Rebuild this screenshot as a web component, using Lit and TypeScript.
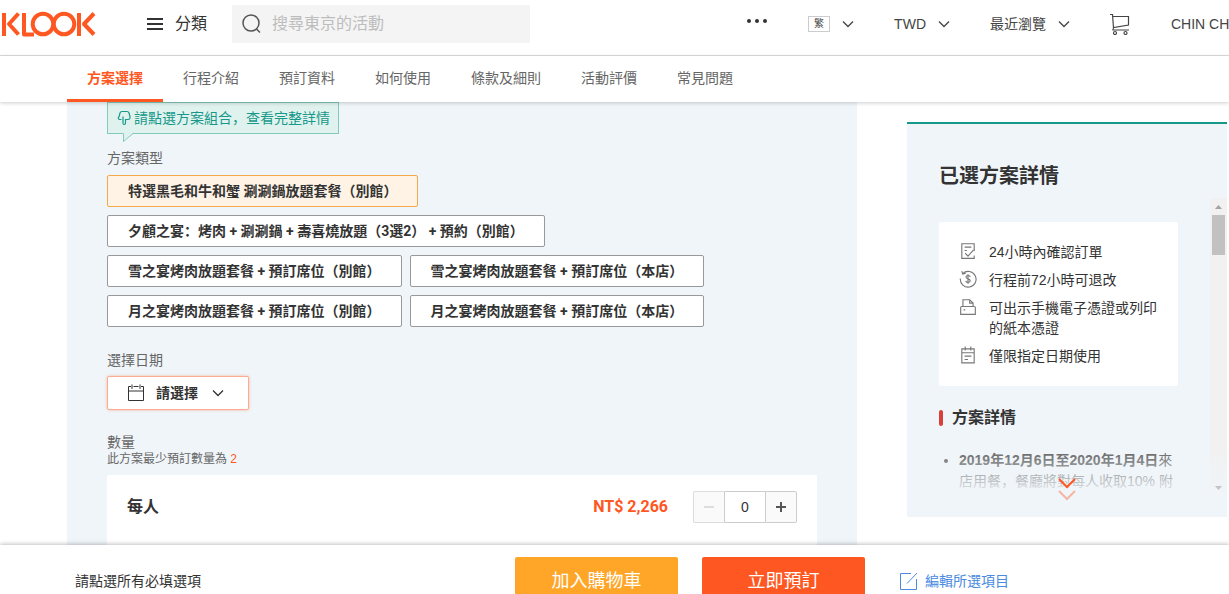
import { LitElement, html, css, svg } from "lit";
import { customElement, state } from "lit/decorators.js";
import { classMap } from "lit/directives/class-map.js";

const chevron = html`<svg class="chev" viewBox="0 0 10 8" aria-hidden="true"><path d="M0 1.500l5 5 5-5" /></svg>`;

const featureIcons = {
  confirm: svg`<path d="M13.500 8V1.500H2.500v13h11V12"/><path d="M5 4.500h6M5 7.500h2M5.500 10l2.500 2.500 5-5.500"/>`,
  refund: svg`<path d="M3.300 3.200A7 7 0 1 1 1.200 7.500M2.500 1l.8 2.600 2.700-.7"/><path d="M10 6.200C9.700 4.400 6.200 4.500 6.200 6.300c0 2 3.800 1.200 3.800 3.300 0 1.800-3.700 2-4 0M8 3.700v8.600"/>`,
  print: svg`<path d="M3.500 7.500v-6h6l3 3v3M9.500 1.500v3h3M2.500 7.500h11q1 0 1 1v6h-13v-6q0-1 1-1M4 10.500h1.500"/>`,
  calendar: svg`<path d="M2.500 2.500h11v12.500h-11zM2.500 6h11M5.500 .5v3.500M10.500 .5v3.500M5 9h6M5 12h3"/>`,
};

@customElement("app-root")
export class AppRoot extends LitElement {
  @state() private selected = 0;
  @state() private count = 0;

  private tabs = ["方案選擇", "行程介紹", "預訂資料", "如何使用", "條款及細則", "活動評價", "常見問題"];

  private packages = [
    "特選黑毛和牛和蟹 涮涮鍋放題套餐（別館）",
    "夕顧之宴：烤肉 + 涮涮鍋 + 壽喜燒放題（3選2） + 預約（別館）",
    "雪之宴烤肉放題套餐 + 預訂席位（別館）",
    "雪之宴烤肉放題套餐 + 預訂席位（本店）",
    "月之宴烤肉放題套餐 + 預訂席位（別館）",
    "月之宴烤肉放題套餐 + 預訂席位（本店）",
  ];

  private features: { icon: keyof typeof featureIcons; text: string }[] = [
    { icon: "confirm", text: "24小時內確認訂單" },
    { icon: "refund", text: "行程前72小時可退改" },
    { icon: "print", text: "可出示手機電子憑證或列印的紙本憑證" },
    { icon: "calendar", text: "僅限指定日期使用" },
  ];

  static styles = css`
    :host {
      display: flex;
      flex-direction: column;
      height: 100vh;
      overflow: hidden;
      background: #fff;
      color: #333;
      font: 14px/20px "Liberation Sans", "Noto Sans CJK SC", sans-serif;
    }
    * { box-sizing: border-box; }
    h2, h3, p, ul { margin: 0; padding: 0; }
    ul { list-style: none; }
    a { color: inherit; text-decoration: none; }
    button { font: inherit; color: inherit; margin: 0; cursor: pointer; }
    svg { display: block; fill: none; stroke: currentColor; flex: none; }
    .chev { width: 10px; height: 8px; overflow: visible; stroke-width: 1.300; }

    .top {
      flex: none;
      display: flex;
      align-items: center;
      height: 56px;
      padding-bottom: 7px;
      border-bottom: 1px solid #ddd;
    }
    .logo { color: #ff5722; margin-left: 1px; }
    .logo svg { width: 96px; height: 26px; stroke-width: 4; stroke-linejoin: round; }
    .cats {
      display: flex;
      align-items: center;
      gap: 12px;
      margin-left: 50px;
      padding: 0;
      border: 0;
      background: none;
      font-size: 16px;
    }
    .cats svg { width: 16px; height: 14px; stroke-width: 2; }
    .search {
      display: flex;
      align-items: center;
      gap: 10px;
      width: 298px;
      height: 38px;
      margin-left: 25px;
      padding-left: 10px;
      background: #f4f4f4;
      color: #555;
    }
    .search svg { width: 20px; height: 20px; stroke-width: 1.500; }
    .search input {
      flex: 1;
      min-width: 0;
      padding: 0;
      border: 0;
      outline: 0;
      background: none;
      font: inherit;
      font-size: 16px;
    }
    .search input::placeholder { color: #bdbdbd; opacity: 1; }
    .tools { display: flex; align-items: center; gap: 41px; margin-left: auto; color: #444; }
    .tools button {
      display: flex;
      align-items: center;
      gap: 13px;
      padding: 0;
      border: 0;
      background: none;
      white-space: nowrap;
    }
    .tools .dots svg { width: 20px; height: 10px; fill: #333; stroke: none; }
    .lang {
      width: 22px;
      height: 16px;
      border: 1px solid #ccc;
      font-size: 10px;
      line-height: 14px;
      text-align: center;
    }
    .cart svg { width: 20px; height: 22px; stroke-width: 1.200; }
    .user { width: 58px; overflow: hidden; white-space: nowrap; }

    .tabs {
      position: relative;
      z-index: 2;
      flex: none;
      display: flex;
      height: 46px;
      padding-left: 67px;
      background: #fff;
      box-shadow: 0 1px 4px rgba(0, 0, 0, 0.2);
      color: #666;
    }
    .tab { padding: 12px 20px; border-bottom: 3px solid transparent; white-space: nowrap; }
    .tab.on { color: #ff5722; border-color: #ff5722; font-weight: 700; }

    .page {
      flex: 1;
      min-height: 0;
      display: flex;
      align-items: flex-start;
      gap: 50px;
      padding: 0 2px 0 67px;
      overflow: hidden;
    }
    .options { flex: 1; min-width: 0; padding: 0 40px 40px; background: #f0f5f9; }
    .tip {
      position: relative;
      display: flex;
      align-items: center;
      gap: 3px;
      width: max-content;
      height: 32px;
      padding: 0 8px 0 9px;
      border: 1px solid #80cbbb;
      background: #e0f2ee;
      color: #16998a;
    }
    .tip .hand { width: 14px; height: 16px; stroke-width: 1.200; }
    .tip .tail {
      position: absolute;
      left: 14px;
      top: 100%;
      width: 12px;
      height: 9px;
    }
    .tail { fill: #e0f2ee; stroke: #80cbbb; }
    .label { color: #666; }
    .tip + .label { margin-top: 14px; }
    .packs { display: flex; flex-wrap: wrap; gap: 8px; margin-top: 7px; }
    .pack {
      height: 32px;
      padding: 0 20px;
      border: 1px solid #999;
      border-radius: 2px;
      background: #fff;
      font-family: Roboto, "Noto Sans CJK SC", sans-serif;
      font-weight: 700;
      white-space: nowrap;
    }
    .pack.on { border-color: #f5a94a; background: #fff3e6; }
    .packs + .label { margin-top: 23px; }
    .date {
      display: flex;
      align-items: center;
      width: 142px;
      height: 34px;
      margin: 6px 0 22px;
      padding: 0 19px;
      border: 1px solid #ffab91;
      border-radius: 2px;
      background: #fff;
      box-shadow: 0 0 3px rgba(255, 87, 34, 0.4);
      font-weight: 700;
    }
    .date .cal { width: 18px; height: 18px; margin-right: 11px; }
    .date .chev { margin-left: 15px; }
    .note { color: #666; font-size: 12px; line-height: 14px; }
    .accent { color: #ff5722; }
    .unit {
      display: flex;
      align-items: center;
      height: 64px;
      margin-top: 9px;
      padding: 0 20px;
      background: #fff;
      font-size: 16px;
      font-weight: 700;
    }
    .rest { height: 24px; background: #fff; }
    .price { margin: 0 25px 0 auto; color: #ff5722; font-family: Roboto, sans-serif; }
    .stepper { display: flex; height: 32px; }
    .stepper button, .stepper input {
      border: 1px solid #ccc;
      background: #fafafa;
      padding: 0;
      font: 14px/20px "Liberation Sans", sans-serif;
      text-align: center;
      color: #333;
    }
    .stepper button { display: grid; place-items: center; width: 32px; }
    .stepper svg { width: 12px; height: 12px; stroke-width: 2; }
    .stepper input { width: 40px; background: #fff; border-radius: 0; border-width: 1px 0; }
    .stepper .less { border-radius: 2px 0 0 2px; border-color: #ddd; border-right-color: #ccc; }
    .stepper .less:disabled { color: #ddd; }
    .stepper .more { border-radius: 0 2px 2px 0; color: #555; }

    .side {
      flex: none;
      width: 320px;
      margin-top: 20px;
      border-top: 2px solid #16998a;
      background: #f0f5f9;
    }
    .side h2 { padding: 37px 32px 0; font-size: 20px; line-height: 30px; }
    .scroll { display: flex; justify-content: space-between; height: 299px; margin: 7px 0 20px; }
    .inner {
      position: relative;
      width: 271px;
      padding: 24px 0 0 32px;
      overflow: hidden;
    }
    .bar {
      display: flex;
      flex-direction: column;
      align-items: center;
      width: 17px;
      background: linear-gradient(#f1f1f1 85%, #f0f5f9);
      color: #a3a3a3;
    }
    .bar svg { width: 17px; height: 17px; fill: currentColor; stroke: none; }
    .thumb { width: 13px; height: 40px; background: #c1c1c1; }
    .bar .down { margin-top: auto; opacity: 0.6; }
    .features {
      display: flex;
      flex-direction: column;
      gap: 8px;
      padding: 20px 20px;
      border-radius: 2px;
      background: #fff;
    }
    .features li { display: flex; gap: 12px; }
    .features svg { width: 18px; height: 18px; stroke: #777; }
    .side h3 { display: flex; align-items: center; gap: 9px; margin-top: 20px; font-size: 16px; line-height: 24px; }
    .side h3::before { content: ""; width: 4px; height: 16px; border-radius: 2px; background: #d9403a; }
    .detail { margin-top: 20px; line-height: 21px; color: #666; padding-left: 20px; list-style: disc; }
    .fade {
      position: absolute;
      left: 0;
      right: 0;
      bottom: 0;
      height: 46px;
      background: linear-gradient(rgba(240, 245, 249, 0), #f0f5f9);
    }
    .holder { position: relative; }
    .expand {
      position: absolute;
      left: 151px;
      bottom: -4px;
      width: 18px;
      height: 24px;
      padding: 0;
      border: 0;
      background: none;
      color: #ff5722;
    }
    .expand svg { width: 18px; height: 24px; stroke-width: 2; }

    .pay {
      position: relative;
      z-index: 2;
      flex: none;
      display: flex;
      align-items: flex-start;
      height: 49px;
      padding: 12px 220px 0 75px;
      background: #fff;
      box-shadow: 0 -1px 4px rgba(0, 0, 0, 0.25);
    }
    .pay p { line-height: 48px; margin-right: auto; }
    .pay button {
      flex: none;
      width: 163px;
      height: 48px;
      margin-right: 24px;
      padding: 0;
      border: 0;
      border-radius: 2px;
      color: #fff;
      font-size: 18px;
    }
    .buy { background: #ffa628; }
    .now { background: #ff5722; }
    .pay a { display: flex; align-items: center; gap: 7px; height: 48px; margin-left: 10px; color: #4a8ae0; }
    .pay a svg { width: 19px; height: 19px; }
  `;

  render() {
    return html`
      <header class="top">
        <a class="logo" href="#" aria-label="KLOOK">
          <svg viewBox="0 0 96 26">
            <path d="M3 2v23M17.500 2.500L8 13l9.500 10.500M23 2v21.500h10M78 2v23M93 2.500L83 13l10 10.500" />
            <circle cx="42" cy="13" r="10.300" /><circle cx="63" cy="13" r="10.300" />
          </svg>
        </a>
        <button class="cats">
          <svg viewBox="0 0 16 14"><path d="M0 2h16M0 7h16M0 12h16" /></svg>分類
        </button>
        <label class="search">
          <svg viewBox="0 0 20 20"><circle cx="9" cy="9" r="8" /><path d="M14.500 15l3.500 3.500" /></svg>
          <input type="search" placeholder="搜尋東京的活動" aria-label="搜尋東京的活動" />
        </label>
        <nav class="tools">
          <button class="dots" aria-label="更多">
            <svg viewBox="0 0 20 10"><circle cx="2" cy="2" r="2" /><circle cx="10" cy="2" r="2" /><circle cx="18" cy="2" r="2" /></svg>
          </button>
          <button><span class="lang">繁</span>${chevron}</button>
          <button>TWD ${chevron}</button>
          <button>最近瀏覽 ${chevron}</button>
          <a class="cart" href="#" aria-label="購物車">
            <svg viewBox="0 0 20 22">
              <path d="M0 1.500h2.500l1 13L18.500 12V3.500H3M3.500 14.500L3 17h16" />
              <circle cx="5" cy="20" r="1.500" /><circle cx="15.500" cy="20" r="1.500" />
            </svg>
          </a>
          <a class="user" href="#">CHIN CH</a>
        </nav>
      </header>

      <nav class="tabs">
        ${this.tabs.map((t, i) => html`<a href="#" class=${classMap({ tab: true, on: i === 0 })}>${t}</a>`)}
      </nav>

      <main class="page">
        <section class="options">
          <div class="tip">
            <svg class="hand" viewBox="0 0 14 16"><path d="M4.500 9.500H3C1 9.500.8 7.500 2 6.800L3 3c.3-1.200.8-1.500 2-1.500h5c1.200 0 1.700.5 2 1.500l1 3.500c.3 2-.5 3-2 3H8.500V13c0 2-2.500 2-2.500 0V6.500" /></svg>
            請點選方案組合，查看完整詳情
            <svg class="tail" viewBox="0 0 12 9"><path stroke="none" d="M1 0h10L1 8z" /><path fill="none" d="M1.500 .5v8L11 .5" /></svg>
          </div>
          <p class="label">方案類型</p>
          <div class="packs">
            ${this.packages.map(
              (p, i) => html`<button class=${classMap({ pack: true, on: i === this.selected })} @click=${() => (this.selected = i)}>${p}</button>`
            )}
          </div>
          <p class="label">選擇日期</p>
          <button class="date">
            <svg class="cal" viewBox="0 0 18 18"><path d="M4 2.500H1.500v14h15v-14H14M6.500 2.500h5M1.500 7h15M5 .5V5M13 .5V5" /></svg>
            請選擇 ${chevron}
          </button>
          <p class="label">數量</p>
          <p class="note">此方案最少預訂數量為 <span class="accent">2</span></p>
          <div class="unit">
            <span>每人</span>
            <span class="price">NT$ 2,266</span>
            <div class="stepper">
              <button class="less" aria-label="減少" ?disabled=${this.count === 0} @click=${() => this.count--}>
                <svg viewBox="0 0 12 12"><path d="M1 6h10" /></svg>
              </button>
              <input aria-label="數量" .value=${String(this.count)} readonly />
              <button class="more" aria-label="增加" @click=${() => this.count++}>
                <svg viewBox="0 0 12 12"><path d="M1 6h10M6 1v10" /></svg>
              </button>
            </div>
          </div>
          <div class="rest"></div>
        </section>

        <aside class="side">
          <h2>已選方案詳情</h2>
          <div class="holder">
            <div class="scroll">
              <div class="inner">
                <ul class="features">
                  ${this.features.map((f) => html`<li><svg viewBox="0 0 16 16">${featureIcons[f.icon]}</svg><span>${f.text}</span></li>`)}
                </ul>
                <h3>方案詳情</h3>
                <ul class="detail">
                  <li><b>2019年12月6日至2020年1月4日</b>來店用餐，餐廳將對每人收取10% 附</li>
                </ul>
                <div class="fade"></div>
              </div>
              <div class="bar">
                <svg viewBox="0 0 17 17"><path d="M5 11l3.500-4 3.500 4z" /></svg>
                <div class="thumb"></div>
                <svg class="down" viewBox="0 0 17 17"><path d="M5 6l3.500 4 3.500-4z" /></svg>
              </div>
            </div>
            <button class="expand" aria-label="展開">
              <svg viewBox="0 0 18 24"><path d="M1 2l8 8 8-8" /><path opacity=".4" d="M1 14l8 8 8-8" /></svg>
            </button>
          </div>
        </aside>
      </main>

      <footer class="pay">
        <p>請點選所有必填選項</p>
        <button class="buy">加入購物車</button>
        <button class="now">立即預訂</button>
        <a href="#">
          <svg viewBox="0 0 19 19"><path d="M12 1.500H1.500v16h16V7M8 11.500L18 1" /></svg>
          編輯所選項目
        </a>
      </footer>
    `;
  }
}
